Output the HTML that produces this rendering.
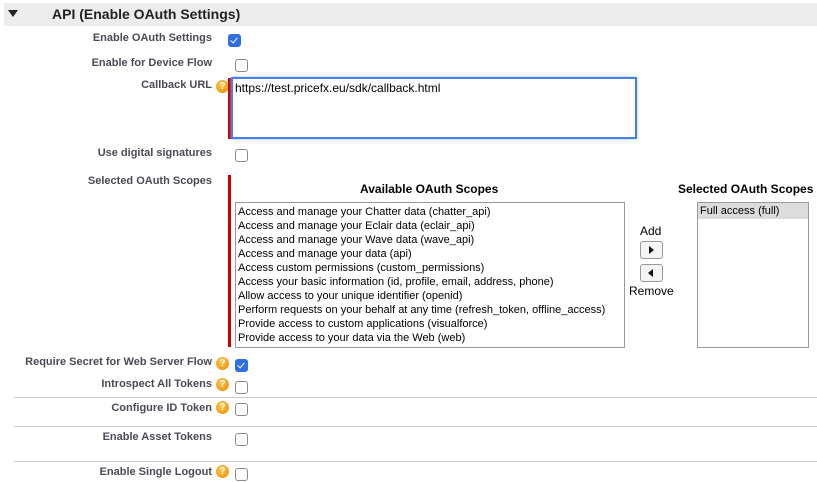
<!DOCTYPE html><html><head><style>
body{margin:0;width:817px;height:482px;background:#fff;position:relative;overflow:hidden;font-family:"Liberation Sans",Arial,sans-serif}
.a{position:absolute}
.l{position:absolute;right:605px;font-size:11px;font-weight:bold;color:#4a4a56;white-space:nowrap}
.cb{position:absolute;left:235px;width:11px;height:11px;border:1px solid #8a8a8a;border-radius:3px;background:#fff}
.ck{background:#2f6fe0;border-color:#2f6fe0}
.ck:after{content:"";position:absolute;left:3px;top:1px;width:3px;height:6px;border:solid #fff;border-width:0 1.5px 1.5px 0;transform:rotate(40deg)}
.h{position:absolute;left:216px;width:13px;height:13px;border-radius:50%;background:radial-gradient(circle at 40% 35%,#ffc54a,#e88a00);color:#fff;font-size:10px;font-weight:bold;text-align:center;line-height:13px}
.hr{position:absolute;left:14px;width:803px;height:1px;background:#c8c8c8}
.red{position:absolute;left:228px;width:3px;background:#c00}
.li{font-size:11px;line-height:14px;color:#000;white-space:nowrap}
.btn{position:absolute;left:640px;width:21px;height:16px;border:1px solid #999;border-radius:3px;background:#f4f4f4}
</style></head><body>
<div class="a" style="left:4px;top:3px;width:813px;height:23px;background:#ececec"></div>
<div class="a" style="left:8px;top:10px;width:0;height:0;border-left:5px solid transparent;border-right:5px solid transparent;border-top:7px solid #222"></div>
<div class="a" style="left:52px;top:6px;font-size:14px;font-weight:bold;color:#222">API (Enable OAuth Settings)</div>

<div class="l" style="top:32px">Enable OAuth Settings</div><div class="cb ck" style="left:228px;top:34px"></div>
<div class="l" style="top:57px">Enable for Device Flow</div><div class="cb" style="top:59px"></div>
<div class="l" style="top:79px">Callback URL</div><div class="h" style="top:80px">?</div>
<div class="red" style="top:78px;height:61px"></div>
<div class="a" style="left:231px;top:77px;width:400px;height:58px;border:2px solid #4a7fe8;box-shadow:0 0 2px #8ab0ff;font-size:12px;padding:0 0 0 2px;line-height:18px">https://test.pricefx.eu/sdk/callback.html</div>
<div class="l" style="top:147px">Use digital signatures</div><div class="cb" style="top:149px"></div>
<div class="l" style="top:175px">Selected OAuth Scopes</div>
<div class="red" style="top:175px;height:172px"></div>
<div class="a" style="left:360px;top:182px;font-size:12px;font-weight:bold">Available OAuth Scopes</div>
<div class="a" style="left:678px;top:182px;font-size:12px;font-weight:bold">Selected OAuth Scopes</div>
<div class="a" style="left:235px;top:202px;width:386px;height:142px;border:1px solid #999;padding:2px 0 0 2px;overflow:hidden">
<div class="li">Access and manage your Chatter data (chatter_api)</div>
<div class="li">Access and manage your Eclair data (eclair_api)</div>
<div class="li">Access and manage your Wave data (wave_api)</div>
<div class="li">Access and manage your data (api)</div>
<div class="li">Access custom permissions (custom_permissions)</div>
<div class="li">Access your basic information (id, profile, email, address, phone)</div>
<div class="li">Allow access to your unique identifier (openid)</div>
<div class="li">Perform requests on your behalf at any time (refresh_token, offline_access)</div>
<div class="li">Provide access to custom applications (visualforce)</div>
<div class="li">Provide access to your data via the Web (web)</div>
</div>
<div class="a" style="left:697px;top:202px;width:110px;height:144px;border:1px solid #999">
<div class="li" style="background:#dcdcdc;padding:1px 2px;line-height:14px">Full access (full)</div></div>
<div class="a" style="left:640px;top:224px;font-size:12px">Add</div>
<div class="btn" style="top:241px"><div class="a" style="left:8px;top:4px;border-top:4px solid transparent;border-bottom:4px solid transparent;border-left:5px solid #111"></div></div>
<div class="btn" style="top:264px"><div class="a" style="left:7px;top:4px;border-top:4px solid transparent;border-bottom:4px solid transparent;border-right:5px solid #111"></div></div>
<div class="a" style="left:629px;top:284px;font-size:12px">Remove</div>

<div class="l" style="top:356px">Require Secret for Web Server Flow</div><div class="h" style="top:357px">?</div><div class="cb ck" style="top:359px"></div>
<div class="l" style="top:378px">Introspect All Tokens</div><div class="h" style="top:378px">?</div><div class="cb" style="top:381px"></div>
<div class="hr" style="top:397px"></div>
<div class="l" style="top:402px">Configure ID Token</div><div class="h" style="top:401px">?</div><div class="cb" style="top:403px"></div>
<div class="hr" style="top:426px"></div>
<div class="l" style="top:431px">Enable Asset Tokens</div><div class="cb" style="top:433px"></div>
<div class="hr" style="top:461px"></div>
<div class="l" style="top:466px">Enable Single Logout</div><div class="h" style="top:465px">?</div><div class="cb" style="top:468px"></div>
</body></html>
